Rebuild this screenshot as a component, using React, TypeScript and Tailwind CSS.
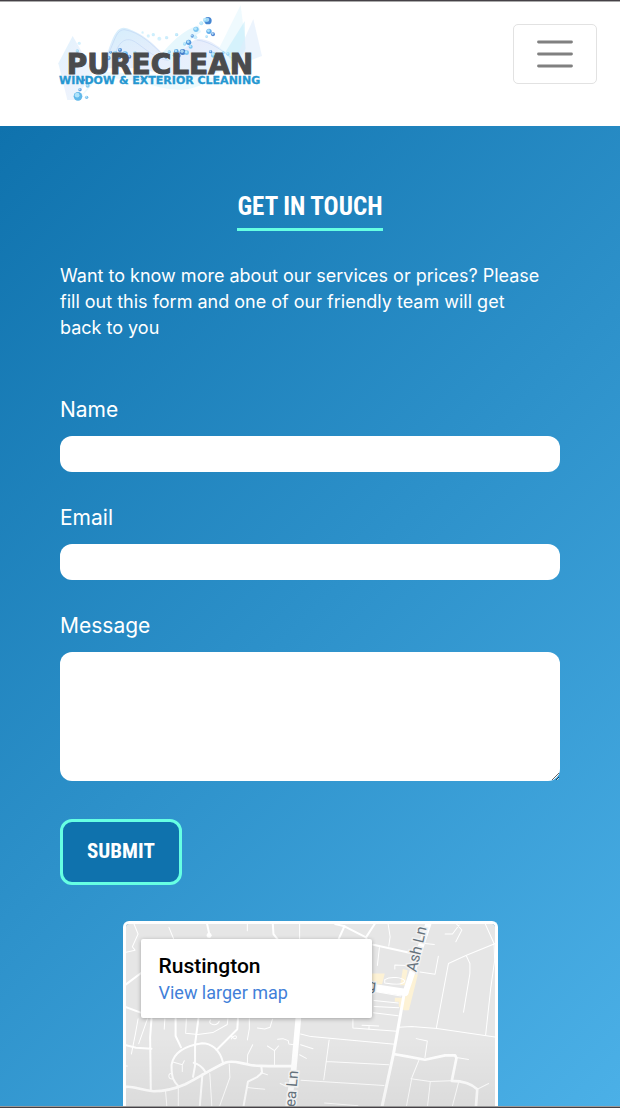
const bubbles: [number, number, number, string][] = [
  [504, 62, 11, "#1668c7"], [496, 60, 7, "#8ed5f7"], [507, 94, 8, "#3d9be6"], [519, 103, 6, "#2769c9"],
  [484, 70, 6, "#a8def8"], [468, 88, 8, "#5fb7ee"], [457, 108, 5, "#347bd2"], [466, 112, 6, "#b9e4fa"],
  [446, 127, 8, "#2b7fd6"], [434, 132, 5, "#8bcff4"], [452, 140, 6, "#63bbef"], [428, 156, 9, "#1f63bf"],
  [440, 158, 7, "#62baf0"], [409, 154, 7, "#388fdc"], [416, 167, 6, "#2b67c2"], [402, 166, 4, "#78c3f0"],
  [388, 156, 5, "#72bfef"], [378, 171, 5, "#2f76cf"], [512, 155, 5, "#2f7bd1"], [521, 165, 8, "#65bcf0"],
  [538, 166, 7, "#3487d8"], [550, 158, 4, "#77c6f2"], [564, 162, 5, "#87cdf4"], [500, 110, 4, "#9bd6f6"],
  [240, 150, 6, "#2c6ec8"], [255, 163, 9, "#4aa9e9"], [268, 170, 6, "#2668c5"], [226, 160, 7, "#74c3f1"],
  [205, 174, 7, "#3e92dd"], [238, 172, 6, "#1f71cd"], [285, 158, 5, "#8bcff5"], [212, 157, 4, "#2c74cf"],
  [340, 104, 5, "#c2e8fb"], [358, 116, 6, "#cfedfc"], [380, 113, 5, "#bfe6fa"], [410, 104, 5, "#acdef8"],
  [118, 130, 5, "#d1eefc"], [112, 153, 5, "#8dd0f4"], [135, 170, 6, "#c4e8fa"], [122, 182, 4, "#4a9adc"],
  [120, 269, 5, "#3d87d6"], [143, 257, 6, "#70c0ef"], [114, 289, 13, "#3ba7e5"], [140, 292, 5, "#55aee8"],
  [132, 240, 4, "#2b64c2"], [308, 236, 6, "#4197dc"], [308, 98, 4, "#ddf3fd"], [325, 108, 5, "#d6f0fc"],
];

function Logo() {
  return (
    <svg viewBox="0 0 204 100" className="h-[100px] w-[204px]" role="img" aria-label="Pureclean Window & Exterior Cleaning">
      <defs>
        <linearGradient id="wave" x1="0" y1="0" x2="1" y2="1">
          <stop offset="0" stopColor="#c9eafb" />
          <stop offset="0.5" stopColor="#e2e9fb" />
          <stop offset="1" stopColor="#ddf4fd" />
        </linearGradient>
      </defs>
      <g transform="scale(0.3333) translate(-54 -9)">
        <path d="M98 108 55 190 82 300 105 300 160 215Z" fill="url(#wave)" opacity=".6" />
        <path d="M180 205C208 170 213 86 250 83C282 86 338 122 370 164C408 194 440 120 478 116C530 120 568 171 610 200L430 240 300 205Z" fill="url(#wave)" opacity=".8" />
        <path d="M360 168C390 130 430 90 475 76L483 96C440 120 425 164 398 190Z" fill="#e0f5fd" opacity=".8" />
        <path d="M530 160 602 15 618 145 576 188Z" fill="#e8f8fe" opacity=".7" />
        <path d="M555 158 614 64 616 154 580 190Z" fill="#bceafa" opacity=".5" />
        <path d="M590 170 640 57 666 168 620 186Z" fill="#dfecfc" opacity=".6" />
        <path d="M120 292C160 260 160 230 210 235C330 238 380 290 470 260L540 235 180 215Z" fill="#e2f7fd" opacity=".65" />
        <path d="M195 180C225 130 224 91 253 89C299 96 337 132 381 178M225 166C236 120 262 109 289 128S352 180 386 181M470 120C514 124 555 158 590 185" fill="none" stroke="#b7cef1" strokeWidth="2" opacity=".7" />
        {bubbles.map(([x, y, r, color], i) => (
          <g key={i}>
            <circle cx={x} cy={y} r={r} fill={color} opacity=".8" />
            <circle cx={x - r / 5} cy={y - r / 4} r={r * 0.55} fill="#c9f2ff" opacity=".75" />
          </g>
        ))}
      </g>
      <text x="102" y="71" textAnchor="middle" fontSize="28" fontWeight="700" fill="#4a4b4d" stroke="#4a4b4d" strokeWidth="1" className="font-['DejaVu_Sans',sans-serif]">PURECLEAN</text>
      <text x="1" y="81" fontSize="11" fontWeight="700" fill="#2597d1" stroke="#2597d1" strokeWidth=".3" className="font-['DejaVu_Sans',sans-serif]">WINDOW &amp; EXTERIOR CLEANING</text>
    </svg>
  );
}

function StreetMap() {
  return (
    <svg viewBox="48 42 1107 543" preserveAspectRatio="xMinYMin slice" className="absolute inset-0 h-full w-full" aria-hidden="true">
      <defs>
        <linearGradient id="shade" x1="0" y1="0" x2="0" y2="1">
          <stop offset=".6" stopColor="#000" stopOpacity="0" />
          <stop offset="1" stopColor="#000" stopOpacity=".05" />
        </linearGradient>
      </defs>
      <rect x="48" y="42" width="1107" height="560" fill="#e6e6e6" />
      <path d="M782 190H820L812 222H782ZM874 176 888 180 880 225 866 225ZM905 192H919L892 299H878L862 288V274H850V262H872L882 240Z" fill="#fdf2d5" />
      <g fill="none" stroke="#fff" strokeLinecap="round" strokeLinejoin="round">
        <g strokeWidth="3">
          <path d="M72 42 84 72 67 110 75 120 48 126M176 52 190 86M410 42V62M566 42V86M830 42 836 80 832 108M804 112 798 166M1000 72 1022 72 1042 45M1034 42 1050 60 1032 95M1120 42 1146 100 1148 150 1136 235 1121 373M1155 98 1062 136 1010 160 974 352M1064 138 1074 160V190L1055 305M980 138 970 192 925 185M940 100 968 103M850 176V164L885 166M788 270 860 278M788 288 862 292M786 307 860 316M786 243 868 257" />
          <path d="M820 208C835 198 872 200 880 212C875 228 835 220 820 218ZM725 326V352L856 362M752 344 802 346M773 346V357M862 350 900 348 976 354 1155 380" />
          <path d="M84 325 76 370 64 430M112 325 86 399M164 325 162 356M228 325 226 368 262 372 307 366 350 342 352 325M300 328C290 344 320 348 326 332M362 385C364 376 380 371 377 382C374 386 368 384 362 376M416 325V354L410 388M440 352 462 355 478 350 485 326M500 386 516 384 532 390 534 400 548 402M426 402 411 432 410 458M470 406 491 420 503 406M491 420V463M569 370 600 378 850 401M569 402 606 414M566 432 586 443M654 388 638 507M646 452 832 462M570 508 818 524M640 576 740 584" />
          <path d="M914 384 947 391 940 440M922 448 901 500 882 600M898 504 956 512 1016 510M956 512 946 600M1040 515 1018 600M1096 535 1130 518M1034 440 1070 446M48 466 52 466M188 454 216 462 222 450M216 462V482M188 504C176 507 172 494 180 488C186 486 188 490 186 504M356 460 358 500 322 600M298 488 305 600M166 540 171 600M204 530V600M410 530 462 535M450 485 470 492M508 518 526 526" />
        </g>
        <g strokeWidth="6">
          <path d="M48 222 96 186M48 290 94 307M290 42 296 70M486 42 488 72 504 92M700 48 682 88M672 42 700 49 764 82 790 42M764 82 768 92M786 104 894 128M48 404 78 411 124 414M124 325 120 380 122 540M196 325V376L212 410M264 325 254 400V465L248 498M382 325 380 356 318 418M338 458C328 414 300 398 275 398C228 405 190 425 184 462C183 500 190 512 206 528M250 456C264 460 278 472 284 482M276 490 267 600M452 468 454 486 440 498 412 512 396 600" />
        </g>
        <path d="M48 528C70 525 90 537 130 541C165 541 202 530 225 520C265 500 310 470 346 455C370 448 390 458 412 461C430 466 450 466 548 466" strokeWidth="8" />
        <path d="M846 430 886 437 940 447 1000 434 1030 434 1034 442 1020 510C1050 510 1080 520 1096 535L1091 600" strokeWidth="8" />
        <path d="M878 250 846 430 809 600" strokeWidth="9" />
        <path d="M562 325 548 480 530 600" strokeWidth="17" />
        <path d="M782 231 880 246" strokeWidth="22" />
        <path d="M882 246 950 42" strokeWidth="18" />
        <circle cx="296" cy="76" r="7" fill="#fff" />
      </g>
      <rect x="48" y="42" width="1107" height="560" fill="url(#shade)" />
      <g fontSize="45" fill="#65727c" stroke="#f1f1f1" strokeWidth="9" paintOrder="stroke" className="font-[Roboto,sans-serif]">
        <text transform="translate(914 187) rotate(-77)">Ash Ln</text>
        <text transform="translate(550 615) rotate(-85)">Sea Ln</text>
        <text transform="translate(768 238) rotate(6)">g</text>
      </g>
    </svg>
  );
}

function Field({ id, label, type }: { id: string; label: string; type: string }) {
  return (
    <div className="flex flex-col gap-[11px]">
      <label htmlFor={id} className="text-[21px] leading-[30px]">{label}</label>
      <input id={id} name={id} type={type} className="h-9 w-full rounded-xl bg-white px-3 text-base text-gray-900" />
    </div>
  );
}

export default function App() {
  return (
    <div className="flex min-h-screen flex-col border-y border-[#454146] bg-white font-[Inter,'Open_Sans',sans-serif]">
      <header className="flex h-[125px] items-start justify-between border-t border-[#aaa] pr-[23px] pl-[58px]">
        <a href="#" className="mt-px">
          <Logo />
        </a>
        <button type="button" aria-label="Toggle navigation" className="mt-[22px] flex h-[60px] w-[84px] items-center justify-center rounded-[5px] border border-[#e2e2e2]">
          <svg viewBox="0 0 36 30" className="h-[30px] w-9" fill="none" stroke="#808080" strokeWidth="2.8" strokeLinecap="round" aria-hidden="true">
            <path d="M1.5 3H34.5M1.5 15H34.5M1.5 27H34.5" />
          </svg>
        </button>
      </header>

      <main className="flex flex-1 flex-col border-b border-[#999] bg-[linear-gradient(135deg,#0f72ad,#4bb0e7)] px-[60px] pt-[60px] text-white">
        <h1 className="self-center border-b-[3px] border-[#66ffe3] text-[25px] leading-[42px] font-bold font-['Liberation_Sans_Narrow','Roboto_Condensed','Open_Sans_Condensed',sans-serif]">
          GET IN TOUCH
        </h1>
        <p className="mt-8 text-lg leading-[26px]">
          Want to know more about our services or prices? Please
          <br />
          fill out this form and one of our friendly team will get
          <br />
          back to you
        </p>

        <form className="mt-[54px] flex flex-col" onSubmit={(e) => e.preventDefault()}>
          <div className="flex flex-col gap-[31px]">
            <Field id="name" label="Name" type="text" />
            <Field id="email" label="Email" type="email" />
            <div className="flex flex-col gap-[11px]">
              <label htmlFor="message" className="text-[21px] leading-[30px]">Message</label>
              <textarea id="message" name="message" className="h-[129px] w-full resize-y rounded-xl bg-white px-3 py-2 text-base text-gray-900" />
            </div>
          </div>
          <button type="submit" className="mt-[38px] h-[66px] self-start rounded-xl border-[3px] border-[#66ffe3] bg-[#0f72ad] px-6 text-[21px] font-bold font-['Liberation_Sans_Narrow','Roboto_Condensed','Open_Sans_Condensed',sans-serif]">
            SUBMIT
          </button>
        </form>

        <section aria-label="Map" className="relative mt-9 min-h-[184px] w-3/4 flex-1 self-center overflow-hidden rounded-t-md border-[3px] border-b-0 border-white font-[Roboto,sans-serif]">
          <StreetMap />
          <div className="absolute top-[15px] left-[15px] w-[231px] rounded-xs bg-white px-[18px] py-[13px] shadow-[0_1px_4px_rgba(0,0,0,0.3)]">
            <h2 className="text-[21px] leading-7 font-medium text-black">Rustington</h2>
            <a href="#" className="block text-lg leading-[25px] text-[#427fd9]">View larger map</a>
          </div>
        </section>
      </main>
    </div>
  );
}
